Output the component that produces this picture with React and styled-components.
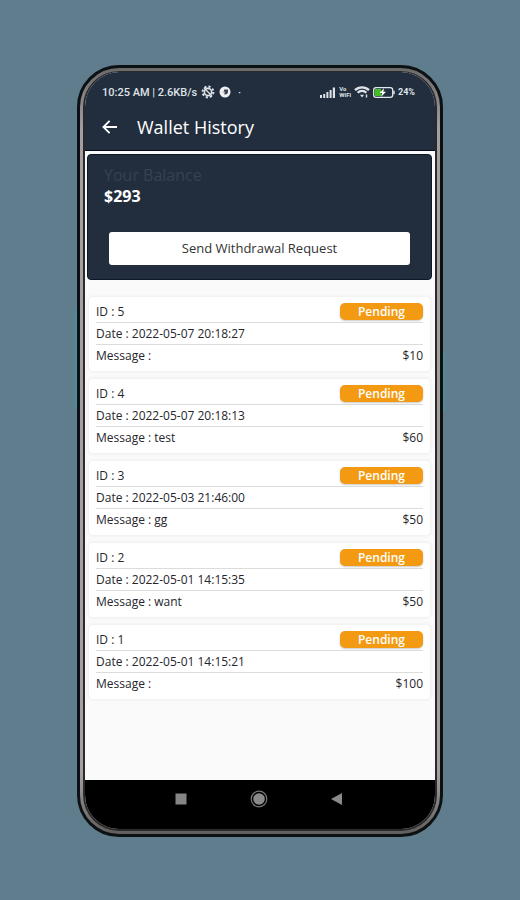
import styled, { createGlobalStyle } from "styled-components";

const GlobalStyle = createGlobalStyle`
  * {
    box-sizing: border-box;
  }
  body {
    margin: 0;
    background: #5f7d8c;
    font-family: "Open Sans", "Noto Sans", sans-serif;
    color: #26262c;
  }
`;

const Page = styled.div`
  display: flex;
  min-height: 100vh;
  padding: 65px 77px 63px;
`;

const Phone = styled.div`
  position: relative;
  display: flex;
  flex: 1;
  min-width: 0;
  padding: 3px;
  border: 3px solid #0c1214;
  border-radius: 42px;
  background: linear-gradient(#6b6a6a, #a59f9f 8%, #a59f9f 92%, #625e5e);
`;

const SideKey = styled.span`
  position: absolute;
  top: ${(p) => p.$top}px;
  ${(p) => p.$side}: -5px;
  width: 2px;
  height: ${(p) => p.$height}px;
  background: #4f8a95;
`;

const Screen = styled.div`
  display: flex;
  flex: 1;
  flex-direction: column;
  min-width: 0;
  overflow: hidden;
  border: 2px solid #2a2a2c;
  border-top-width: 1px;
  border-radius: 36px;
  background: #fafafa;
`;

const Header = styled.header`
  background: #222e3e;
  border-bottom: 1px solid #060a1c;
  color: #fff;
`;

const StatusBar = styled.div`
  display: flex;
  align-items: center;
  justify-content: space-between;
  height: 40px;
  padding: 0 20px 0 17px;
  color: #dfe3e8;
  font-family: Roboto, sans-serif;
  font-size: 11px;
  font-weight: 500;
`;

const StatusGroup = styled.div`
  display: flex;
  align-items: center;
  gap: ${(p) => p.$gap}px;
`;

const BatteryLevel = styled.span`
  font-size: 9px;
  font-weight: 700;
`;

const TitleBar = styled.div`
  display: flex;
  align-items: center;
  gap: 18px;
  height: 38px;
  padding: 0 16px 8px;
`;

const BackButton = styled.button`
  display: flex;
  padding: 0;
  border: 0;
  background: none;
  color: inherit;
`;

const Title = styled.h1`
  margin: 0;
  font-size: 18px;
  font-weight: 400;
  line-height: 24px;
`;

const Content = styled.main`
  flex: 1;
  padding: 3px 3px 3px 2px;
`;

const BalanceCard = styled.section`
  padding: 10px 21px 14px 16px;
  border: 1px solid #0d1726;
  border-radius: 4px;
  background: #222e3e;
`;

const BalanceLabel = styled.div`
  color: #364252;
  font-size: 16px;
  line-height: 20px;
`;

const BalanceValue = styled.div`
  color: #fff;
  font-size: 16px;
  font-weight: 700;
  line-height: 22px;
`;

const WithdrawButton = styled.button`
  display: block;
  width: calc(100% - 5px);
  height: 33px;
  margin: 25px 0 0 5px;
  padding: 0 0 2px;
  border: 0;
  border-radius: 3px;
  background: #fff;
  color: #333;
  font: 400 13px "Open Sans", "Noto Sans", sans-serif;
`;

const History = styled.ul`
  display: flex;
  flex-direction: column;
  gap: 8px;
  margin: 0;
  padding: 17px 2px;
  list-style: none;
`;

const Entry = styled.li`
  padding: 4px 7px 5px;
  border-radius: 4px;
  background: #fff;
  box-shadow: 0 0 3px 1px #eeeeee;
`;

const Row = styled.div`
  display: flex;
  align-items: center;
  justify-content: space-between;
  height: 22px;
  border-bottom: 1px solid #dcdcdc;
  font-size: 12px;

  &:last-child {
    height: 21px;
    border-bottom: 0;
  }
`;

const Badge = styled.span`
  width: 83px;
  border-radius: 5px;
  background: #f39a12;
  box-shadow: 0 1px 2px #c9c9c9;
  color: #fff;
  font-weight: 600;
  line-height: 17px;
  text-align: center;
`;

const NavBar = styled.nav`
  display: flex;
  justify-content: center;
  gap: 58px;
  height: 49px;
  padding: 9px 3px 0 0;
  background: #000;
`;

const NavButton = styled.button`
  display: flex;
  padding: 0;
  border: 0;
  background: none;
`;

const entries = [
  { id: 5, date: "2022-05-07 20:18:27", message: "", amount: "$10" },
  { id: 4, date: "2022-05-07 20:18:13", message: "test", amount: "$60" },
  { id: 3, date: "2022-05-03 21:46:00", message: "gg", amount: "$50" },
  { id: 2, date: "2022-05-01 14:15:35", message: "want", amount: "$50" },
  { id: 1, date: "2022-05-01 14:15:21", message: "", amount: "$100" },
];

const GearIcon = () => (
  <svg width="14" height="14" viewBox="0 0 14 14" fill="none" stroke="#dfe3e8">
    <circle cx="7" cy="7" r="3.6" strokeWidth="1.6" />
    <circle cx="7" cy="7" r="5.4" strokeWidth="2" strokeDasharray="2.2 2" />
    <path d="M3 3l8 8" strokeWidth="1.2" />
  </svg>
);

const DiscIcon = () => (
  <svg width="12" height="12" viewBox="0 0 12 12">
    <circle cx="6" cy="6" r="5.5" fill="#eef0f3" />
    <path d="M5 3.4h4v2.2a3 3 0 0 1-3 3H5.4V6H5z" fill="#3a4657" />
    <path d="M3.2 5.6h2.6V8z" fill="#a5acb6" />
  </svg>
);

const SignalIcon = () => (
  <svg width="16" height="11" viewBox="0 0 16 11" fill="#dfe3e8">
    <path d="M0 8h2v3H0zM3.2 7h2v4h-2zM6.4 5h2v6h-2zM9.6 3h2v8h-2zM12.8 0.5h2.2v10.5h-2.2z" />
  </svg>
);

const WifiIcon = () => (
  <svg width="16" height="12" viewBox="0 0 16 12" fill="none" stroke="#dfe3e8">
    <path d="M1 4.2a10 10 0 0 1 14 0" strokeWidth="2.4" />
    <path d="M3.6 6.8a6.2 6.2 0 0 1 8.8 0" strokeWidth="2.2" />
    <path d="M6 8.8h4L8 11.4z" fill="#dfe3e8" stroke="none" />
    <path d="M12.5 8.5v3" strokeWidth="1.4" />
  </svg>
);

const BatteryIcon = () => (
  <svg width="22" height="11" viewBox="0 0 22 11">
    <rect x="0.7" y="0.7" width="19" height="9.6" rx="2.4" fill="none" stroke="#e4e8ec" strokeWidth="1.3" />
    <rect x="2" y="2" width="6" height="7" fill="#3fc11e" />
    <path d="M11 1.2L6.5 6H9l-1 4 5-5.2h-2.6z" fill="#fff" />
    <path d="M20.3 3.8h1.4v3.4h-1.4z" fill="#e4e8ec" />
  </svg>
);

const NetworkLabel = styled.span`
  display: flex;
  flex-direction: column;
  font-size: 6px;
  font-weight: 700;
  line-height: 6px;
`;

const App = () => (
  <>
    <GlobalStyle />
    <Page>
      <Phone>
        <SideKey $side="left" $top={238} $height={102} />
        <SideKey $side="right" $top={284} $height={60} />
        <Screen>
          <Header>
            <StatusBar>
              <StatusGroup $gap={4}>
                <span>10:25 AM | 2.6KB/s</span>
                <GearIcon />
                <DiscIcon />
                <span>&nbsp;·</span>
              </StatusGroup>
              <StatusGroup $gap={3}>
                <SignalIcon />
                <NetworkLabel>
                  <span>Vo</span>
                  <span>WiFi</span>
                </NetworkLabel>
                <WifiIcon />
                <BatteryIcon />
                <BatteryLevel>24%</BatteryLevel>
              </StatusGroup>
            </StatusBar>
            <TitleBar>
              <BackButton aria-label="Back">
                <svg width="18" height="16" viewBox="0 0 18 16" fill="none" stroke="#fff" strokeWidth="1.8">
                  <path d="M16 8H2.4M8.6 1.8L2.4 8l6.2 6.2" />
                </svg>
              </BackButton>
              <Title>Wallet History</Title>
            </TitleBar>
          </Header>
          <Content>
            <BalanceCard>
              <BalanceLabel>Your Balance</BalanceLabel>
              <BalanceValue>$293</BalanceValue>
              <WithdrawButton>Send Withdrawal Request</WithdrawButton>
            </BalanceCard>
            <History>
              {entries.map((entry) => (
                <Entry key={entry.id}>
                  <Row>
                    <span>ID : {entry.id}</span>
                    <Badge>Pending</Badge>
                  </Row>
                  <Row>Date : {entry.date}</Row>
                  <Row>
                    <span>Message : {entry.message}</span>
                    <span>{entry.amount}</span>
                  </Row>
                </Entry>
              ))}
            </History>
          </Content>
          <NavBar>
            <NavButton aria-label="Recent apps">
              <svg width="20" height="20" viewBox="0 0 20 20">
                <path d="M4.5 4.5h11v11h-11z" fill="#858585" />
              </svg>
            </NavButton>
            <NavButton aria-label="Home">
              <svg width="20" height="20" viewBox="0 0 20 20">
                <circle cx="10" cy="10" r="7.8" fill="none" stroke="#777" strokeWidth="1.2" />
                <circle cx="10" cy="10" r="5.8" fill="#8a8a8a" />
              </svg>
            </NavButton>
            <NavButton aria-label="Back to previous screen">
              <svg width="20" height="20" viewBox="0 0 20 20">
                <path d="M15 4v12L4 10z" fill="#8a8a8a" />
              </svg>
            </NavButton>
          </NavBar>
        </Screen>
      </Phone>
    </Page>
  </>
);

export default App;
